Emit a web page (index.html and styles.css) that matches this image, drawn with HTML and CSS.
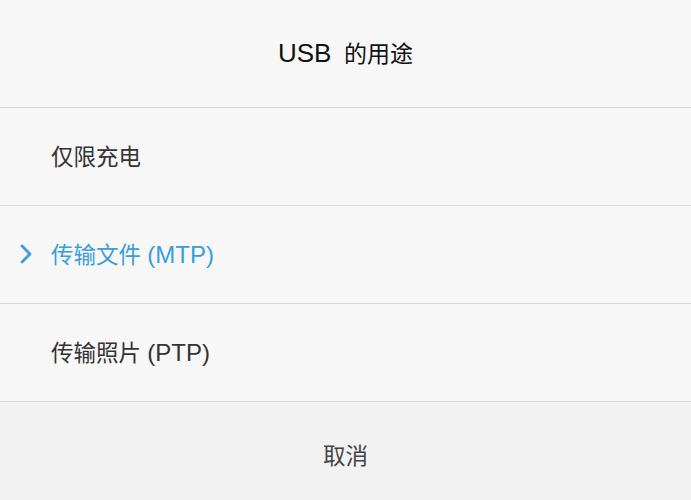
FILE: index.html
```html
<!DOCTYPE html>
<html lang="zh-CN">
<head>
    <meta charset="UTF-8">
    <meta name="viewport" content="width=device-width, initial-scale=1.0">
    <title>USB 的用途</title>
    <link rel="stylesheet" href="styles.css">
</head>
<body>
    <div class="dialog">
        <h1 class="title"><span class="label"><span class="latin">USB</span>&nbsp; 的用途</span></h1>
        <ul class="options">
            <li class="option"><span class="label">仅限充电</span></li>
            <li class="option selected">
                <svg class="check" width="16" height="22" viewBox="0 0 16 22">
                    <path d="M4 3 L12 11 L4 19" fill="none" stroke="#3a9ed8" stroke-width="2.8" stroke-linecap="round" stroke-linejoin="round"/>
                </svg>
                <span class="label">传输文件 <span class="latin">(MTP)</span></span>
            </li>
            <li class="option"><span class="label">传输照片 <span class="latin">(PTP)</span></span></li>
        </ul>
        <div class="cancel">取消</div>
    </div>
</body>
</html>
```

FILE: styles.css
```css
html, body {
    margin: 0;
    padding: 0;
}

body {
    background-color: #f7f7f7;
    font-family: "Liberation Sans", "Noto Sans CJK SC", sans-serif;
    width: 691px;
    height: 500px;
    overflow: hidden;
}

.dialog {
    display: flex;
    flex-direction: column;
    height: 500px;
}

.title {
    margin: 0;
    height: 108px;
    display: flex;
    align-items: center;
    justify-content: center;
    padding-bottom: 4px;
    box-sizing: border-box;
    font-size: 23px;
    font-weight: normal;
    color: #111;
    border-bottom: 1px solid #d4d4d4;
}

.title .latin {
    font-size: 26px;
}

.options {
    list-style: none;
    margin: 0;
    padding: 0;
}

.option {
    position: relative;
    display: flex;
    align-items: center;
    padding-left: 51px;
    padding-bottom: 3px;
    height: 94px;
    font-size: 22.5px;
    color: #333;
    border-bottom: 1px solid #d9d9d9;
}

.option .latin {
    font-size: 24px;
}

.option.selected {
    color: #3a9ed8;
}

.check {
    position: absolute;
    left: 18px;
    top: 37px;
}

.cancel {
    flex: 1;
    display: flex;
    align-items: center;
    justify-content: center;
    padding-top: 6px;
    background-color: #f2f2f2;
    font-size: 22.5px;
    color: #444;
}
```
